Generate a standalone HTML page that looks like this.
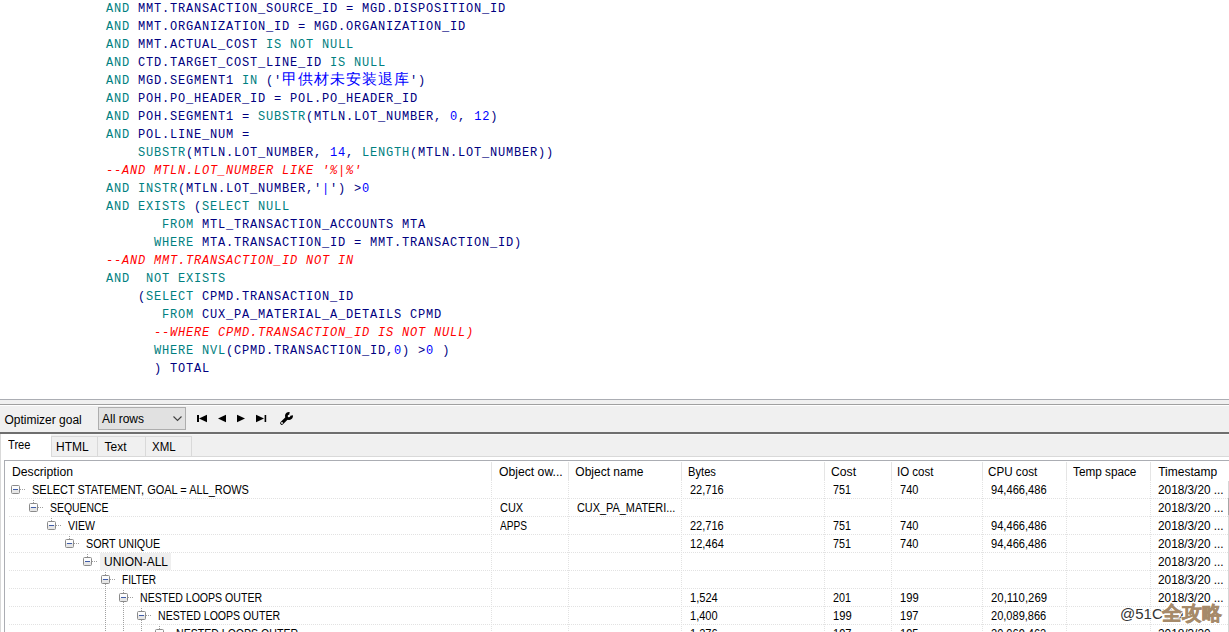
<!DOCTYPE html>
<html><head><meta charset="utf-8">
<style>
*{margin:0;padding:0;box-sizing:border-box}
html,body{width:1229px;height:632px;overflow:hidden;background:#fff;position:relative}
body{font-family:"Liberation Sans",sans-serif;font-size:12px;color:#000}
#code{position:absolute;left:0;top:0;width:1229px;height:399px;background:#fff;overflow:hidden}
.ln{position:absolute;white-space:pre;font-family:"Liberation Mono",monospace;font-size:12px;letter-spacing:0.8px;line-height:18px;color:#000080;height:18px}
.k{color:#008080}
.n{color:#0000ff}
.s{color:#0000ff}
.c{color:#ff0000;font-style:italic}
.cj{font-size:15px;letter-spacing:1px;color:#0000ff;line-height:18px;display:inline-block;height:18px;vertical-align:top;width:128px;overflow:hidden}
.r{position:absolute}
.t{position:absolute;white-space:pre;font-size:12px;line-height:15px;height:15px;transform-origin:0 0;color:#000}
.dv{width:1px;background:repeating-linear-gradient(to bottom,#e2e2e2 0,#e2e2e2 1px,transparent 1px,transparent 2px)}
.dh{height:1px;background:repeating-linear-gradient(to right,#e2e2e2 0,#e2e2e2 1px,transparent 1px,transparent 2px)}
.dv2{width:1px;background:repeating-linear-gradient(to bottom,#a0a0a0 0,#a0a0a0 1px,transparent 1px,transparent 2px)}
.dh2{height:1px;background:repeating-linear-gradient(to right,#a0a0a0 0,#a0a0a0 1px,transparent 1px,transparent 2px)}
.bx{width:9px;height:9px;border:1px solid #8a8a8a;border-radius:1.5px;background:linear-gradient(#fcfcfc,#fcfcfc 50%,#e6e6e6 50%)}
.bx i{position:absolute;left:1px;top:3px;width:5px;height:1px;background:#3f5ca8}
</style></head><body>
<div id="code">
<div class="ln" style="left:106px;top:0px"><span class="k">AND</span> MMT.TRANSACTION_SOURCE_ID = MGD.DISPOSITION_ID</div>
<div class="ln" style="left:106px;top:18px"><span class="k">AND</span> MMT.ORGANIZATION_ID = MGD.ORGANIZATION_ID</div>
<div class="ln" style="left:106px;top:36px"><span class="k">AND</span> MMT.ACTUAL_COST <span class="k">IS NOT NULL</span></div>
<div class="ln" style="left:106px;top:54px"><span class="k">AND</span> CTD.TARGET_COST_LINE_ID <span class="k">IS NULL</span></div>
<div class="ln" style="left:106px;top:72px"><span class="k">AND</span> MGD.SEGMENT1 <span class="k">IN</span> ('<span class="cj">甲供材未安装退库</span>')</div>
<div class="ln" style="left:106px;top:90px"><span class="k">AND</span> POH.PO_HEADER_ID = POL.PO_HEADER_ID</div>
<div class="ln" style="left:106px;top:108px"><span class="k">AND</span> POH.SEGMENT1 = <span class="k">SUBSTR</span>(MTLN.LOT_NUMBER, <span class="n">0</span>, <span class="n">12</span>)</div>
<div class="ln" style="left:106px;top:126px"><span class="k">AND</span> POL.LINE_NUM =</div>
<div class="ln" style="left:138px;top:144px"><span class="k">SUBSTR</span>(MTLN.LOT_NUMBER, <span class="n">14</span>, <span class="k">LENGTH</span>(MTLN.LOT_NUMBER))</div>
<div class="ln c" style="left:106px;top:162px">--AND MTLN.LOT_NUMBER LIKE '%|%'</div>
<div class="ln" style="left:106px;top:180px"><span class="k">AND</span> <span class="k">INSTR</span>(MTLN.LOT_NUMBER,'<span class="s">|</span>') &gt;<span class="n">0</span></div>
<div class="ln" style="left:106px;top:198px"><span class="k">AND</span> <span class="k">EXISTS</span> (<span class="k">SELECT NULL</span></div>
<div class="ln" style="left:162px;top:216px"><span class="k">FROM</span> MTL_TRANSACTION_ACCOUNTS MTA</div>
<div class="ln" style="left:154px;top:234px"><span class="k">WHERE</span> MTA.TRANSACTION_ID = MMT.TRANSACTION_ID)</div>
<div class="ln c" style="left:106px;top:252px">--AND MMT.TRANSACTION_ID NOT IN</div>
<div class="ln" style="left:106px;top:270px"><span class="k">AND</span>  <span class="k">NOT EXISTS</span></div>
<div class="ln" style="left:138px;top:288px">(<span class="k">SELECT</span> CPMD.TRANSACTION_ID</div>
<div class="ln" style="left:162px;top:306px"><span class="k">FROM</span> CUX_PA_MATERIAL_A_DETAILS CPMD</div>
<div class="ln c" style="left:154px;top:324px">--WHERE CPMD.TRANSACTION_ID IS NOT NULL)</div>
<div class="ln" style="left:154px;top:342px"><span class="k">WHERE</span> <span class="k">NVL</span>(CPMD.TRANSACTION_ID,<span class="n">0</span>) &gt;<span class="n">0</span> )</div>
<div class="ln" style="left:154px;top:360px">) TOTAL</div>
</div>
<div class="r" style="left:0;top:399px;width:1229px;height:1px;background:#abadb3"></div>
<div class="r" style="left:0;top:400px;width:1229px;height:4px;background:#f0f0f0"></div>
<div class="r" style="left:0;top:404px;width:1229px;height:1px;background:#a0a0a0"></div>
<div class="r" style="left:0;top:405px;width:1229px;height:1px;background:#ffffff"></div>
<div class="r" style="left:0;top:406px;width:1229px;height:26px;background:#f0f0f0"></div>
<div class="r" style="left:0;top:432px;width:1229px;height:2px;background:#6e6e6e"></div>
<div class="t" style="left:4.4px;top:413px">Optimizer goal</div>

<div class="r" style="left:98px;top:407px;width:88px;height:23px;background:#e1e1e1;border:1px solid #adadad"></div>
<div class="t" style="left:102px;top:412px">All rows</div>

<svg class="r" style="left:172px;top:415px" width="11" height="8" viewBox="0 0 11 8"><path d="M1.5 1.5 L5.5 5.5 L9.5 1.5" fill="none" stroke="#404040" stroke-width="1.1"/></svg>
<svg class="r" style="left:190px;top:410px" width="110" height="18" viewBox="0 0 110 18"><rect x="7" y="5" width="2" height="7" fill="#000"/><path d="M9 8.5 L17 4.8 L17 12.2 Z" fill="#000"/><path d="M28 8.5 L36 4.8 L36 12.2 Z" fill="#000"/><path d="M47 4.8 L47 12.2 L55 8.5 Z" fill="#000"/><path d="M66 4.8 L66 12.2 L74 8.5 Z" fill="#000"/><rect x="74.6" y="5" width="1.6" height="7" fill="#000"/></svg>
<svg class="r" style="left:276px;top:408px" width="22" height="20" viewBox="0 0 22 20"><path d="M5.8 15.2 L10.6 10.4" stroke="#000" stroke-width="3.3" stroke-linecap="round"/><path d="M15.61 7.54 A2.65 2.65 0 1 1 13.46 5.39" fill="none" stroke="#000" stroke-width="2.7"/><circle cx="6" cy="15" r="0.9" fill="#fff"/></svg>
<div class="r" style="left:0;top:434px;width:1229px;height:198px;background:#f0f0f0"></div>
<div class="r" style="left:0;top:434px;width:1229px;height:1px;background:#f7f7f7"></div>
<div class="r" style="left:0;top:456px;width:1229px;height:176px;background:#fff;border-top:1px solid #d9d9d9;border-left:1px solid #d9d9d9"></div>
<div class="r" style="left:51px;top:436px;width:47px;height:21px;background:#f0f0f0;border:1px solid #d9d9d9"></div>
<div class="t" style="left:56px;top:440px">HTML</div>

<div class="r" style="left:97px;top:436px;width:49px;height:21px;background:#f0f0f0;border:1px solid #d9d9d9"></div>
<div class="t" style="left:104.5px;top:440px">Text</div>

<div class="r" style="left:145px;top:436px;width:47px;height:21px;background:#f0f0f0;border:1px solid #d9d9d9"></div>
<div class="t" style="left:151.5px;top:440px;transform:scaleX(0.960)">XML</div>

<div class="r" style="left:0;top:434px;width:51px;height:23px;background:#fff;border-left:1px solid #d9d9d9"></div>
<div class="t" style="left:8px;top:438px;transform:scaleX(0.930)">Tree</div>

<div class="r" style="left:4px;top:460px;width:1240px;height:200px;background:#fff;border:1px solid #abadb3"></div>
<div class="t" style="left:11.5px;top:465px;transform:scaleX(1.016)">Description</div>

<div class="r" style="left:491px;top:462px;width:1px;height:19px;background:#e5e5e5"></div>
<div class="t" style="left:498.6px;top:465px;transform:scaleX(1.016)">Object ow...</div>

<div class="r" style="left:568px;top:462px;width:1px;height:19px;background:#e5e5e5"></div>
<div class="t" style="left:575.3px;top:465px">Object name</div>

<div class="r" style="left:681px;top:462px;width:1px;height:19px;background:#e5e5e5"></div>
<div class="t" style="left:687.6px;top:465px;transform:scaleX(0.931)">Bytes</div>

<div class="r" style="left:824px;top:462px;width:1px;height:19px;background:#e5e5e5"></div>
<div class="t" style="left:830.5px;top:465px;transform:scaleX(1.017)">Cost</div>

<div class="r" style="left:891px;top:462px;width:1px;height:19px;background:#e5e5e5"></div>
<div class="t" style="left:897.4px;top:465px;transform:scaleX(0.960)">IO cost</div>

<div class="r" style="left:982px;top:462px;width:1px;height:19px;background:#e5e5e5"></div>
<div class="t" style="left:988.4px;top:465px;transform:scaleX(0.971)">CPU cost</div>

<div class="r" style="left:1066px;top:462px;width:1px;height:19px;background:#e5e5e5"></div>
<div class="t" style="left:1073.3px;top:465px;transform:scaleX(0.980)">Temp space</div>

<div class="r" style="left:1150px;top:462px;width:1px;height:19px;background:#e5e5e5"></div>
<div class="t" style="left:1158.2px;top:465px">Timestamp</div>

<div class="r dv" style="left:491px;top:482px;height:150px"></div>
<div class="r dv" style="left:568px;top:482px;height:150px"></div>
<div class="r dv" style="left:681px;top:482px;height:150px"></div>
<div class="r dv" style="left:824px;top:482px;height:150px"></div>
<div class="r dv" style="left:891px;top:482px;height:150px"></div>
<div class="r dv" style="left:982px;top:482px;height:150px"></div>
<div class="r dv" style="left:1066px;top:482px;height:150px"></div>
<div class="r dv" style="left:1150px;top:482px;height:150px"></div>
<div class="r dh" style="left:9px;top:498px;width:1220px"></div>
<div class="r dh" style="left:9px;top:516px;width:1220px"></div>
<div class="r dh" style="left:9px;top:534px;width:1220px"></div>
<div class="r dh" style="left:9px;top:552px;width:1220px"></div>
<div class="r dh" style="left:9px;top:570px;width:1220px"></div>
<div class="r dh" style="left:9px;top:588px;width:1220px"></div>
<div class="r dh" style="left:9px;top:606px;width:1220px"></div>
<div class="r dh" style="left:9px;top:624px;width:1220px"></div>
<div class="r dh" style="left:9px;top:642px;width:1220px"></div>
<div class="r" style="left:100px;top:553px;width:71px;height:17px;background:#efefef"></div>
<div class="r bx" style="left:11px;top:485px"><i></i></div>
<div class="r dh2" style="left:20px;top:489px;width:6px"></div>
<div class="t" style="left:32px;top:483px;transform:scaleX(0.914)">SELECT STATEMENT, GOAL = ALL_ROWS</div>

<div class="t" style="left:689.5px;top:483px;transform:scaleX(0.917)">22,716</div>

<div class="t" style="left:832.5px;top:483px;transform:scaleX(0.894)">751</div>

<div class="t" style="left:899.5px;top:483px;transform:scaleX(0.920)">740</div>

<div class="t" style="left:990.5px;top:483px;transform:scaleX(0.926)">94,466,486</div>

<div class="t" style="left:1158.3px;top:483px;transform:scaleX(0.984)">2018/3/20 ...</div>

<div class="r bx" style="left:29px;top:503px"><i></i></div>
<div class="r dh2" style="left:38px;top:507px;width:6px"></div>
<div class="r dv2" style="left:33px;top:500px;height:3px"></div>
<div class="t" style="left:50px;top:501px;transform:scaleX(0.868)">SEQUENCE</div>

<div class="t" style="left:499.5px;top:501px;transform:scaleX(0.912)">CUX</div>

<div class="t" style="left:576.5px;top:501px;transform:scaleX(0.908)">CUX_PA_MATERI...</div>

<div class="t" style="left:1158.3px;top:501px;transform:scaleX(0.984)">2018/3/20 ...</div>

<div class="r bx" style="left:47px;top:521px"><i></i></div>
<div class="r dh2" style="left:56px;top:525px;width:6px"></div>
<div class="r dv2" style="left:51px;top:518px;height:3px"></div>
<div class="t" style="left:68px;top:519px;transform:scaleX(0.877)">VIEW</div>

<div class="t" style="left:499.5px;top:519px;transform:scaleX(0.844)">APPS</div>

<div class="t" style="left:689.5px;top:519px;transform:scaleX(0.917)">22,716</div>

<div class="t" style="left:832.5px;top:519px;transform:scaleX(0.894)">751</div>

<div class="t" style="left:899.5px;top:519px;transform:scaleX(0.920)">740</div>

<div class="t" style="left:990.5px;top:519px;transform:scaleX(0.926)">94,466,486</div>

<div class="t" style="left:1158.3px;top:519px;transform:scaleX(0.984)">2018/3/20 ...</div>

<div class="r bx" style="left:65px;top:539px"><i></i></div>
<div class="r dh2" style="left:74px;top:543px;width:6px"></div>
<div class="r dv2" style="left:69px;top:536px;height:3px"></div>
<div class="t" style="left:86px;top:537px;transform:scaleX(0.894)">SORT UNIQUE</div>

<div class="t" style="left:689.5px;top:537px;transform:scaleX(0.920)">12,464</div>

<div class="t" style="left:832.5px;top:537px;transform:scaleX(0.894)">751</div>

<div class="t" style="left:899.5px;top:537px;transform:scaleX(0.920)">740</div>

<div class="t" style="left:990.5px;top:537px;transform:scaleX(0.926)">94,466,486</div>

<div class="t" style="left:1158.3px;top:537px;transform:scaleX(0.984)">2018/3/20 ...</div>

<div class="r bx" style="left:83px;top:557px"><i></i></div>
<div class="r dh2" style="left:92px;top:561px;width:6px"></div>
<div class="r dv2" style="left:87px;top:554px;height:3px"></div>
<div class="t" style="left:104px;top:555px">UNION-ALL</div>

<div class="t" style="left:1158.3px;top:555px;transform:scaleX(0.984)">2018/3/20 ...</div>

<div class="r bx" style="left:101px;top:575px"><i></i></div>
<div class="r dh2" style="left:110px;top:579px;width:6px"></div>
<div class="r dv2" style="left:105px;top:572px;height:3px"></div>
<div class="t" style="left:122px;top:573px;transform:scaleX(0.841)">FILTER</div>

<div class="t" style="left:1158.3px;top:573px;transform:scaleX(0.984)">2018/3/20 ...</div>

<div class="r bx" style="left:119px;top:593px"><i></i></div>
<div class="r dh2" style="left:128px;top:597px;width:6px"></div>
<div class="r dv2" style="left:123px;top:590px;height:3px"></div>
<div class="t" style="left:140px;top:591px;transform:scaleX(0.880)">NESTED LOOPS OUTER</div>

<div class="t" style="left:689.5px;top:591px;transform:scaleX(0.925)">1,524</div>

<div class="t" style="left:832.5px;top:591px;transform:scaleX(0.900)">201</div>

<div class="t" style="left:899.5px;top:591px;transform:scaleX(0.933)">199</div>

<div class="t" style="left:990.5px;top:591px;transform:scaleX(0.947)">20,110,269</div>

<div class="t" style="left:1158.3px;top:591px;transform:scaleX(0.984)">2018/3/20 ...</div>

<div class="r bx" style="left:137px;top:611px"><i></i></div>
<div class="r dh2" style="left:146px;top:615px;width:6px"></div>
<div class="r dv2" style="left:141px;top:608px;height:3px"></div>
<div class="t" style="left:158px;top:609px;transform:scaleX(0.880)">NESTED LOOPS OUTER</div>

<div class="t" style="left:689.5px;top:609px;transform:scaleX(0.920)">1,400</div>

<div class="t" style="left:832.5px;top:609px;transform:scaleX(0.933)">199</div>

<div class="t" style="left:899.5px;top:609px;transform:scaleX(0.920)">197</div>

<div class="t" style="left:990.5px;top:609px;transform:scaleX(0.920)">20,089,866</div>

<div class="r bx" style="left:155px;top:629px"><i></i></div>
<div class="r dh2" style="left:164px;top:633px;width:6px"></div>
<div class="r dv2" style="left:159px;top:626px;height:3px"></div>
<div class="t" style="left:176px;top:627px;transform:scaleX(0.880)">NESTED LOOPS OUTER</div>

<div class="t" style="left:689.5px;top:627px;transform:scaleX(0.920)">1,276</div>

<div class="t" style="left:832.5px;top:627px;transform:scaleX(0.920)">197</div>

<div class="t" style="left:899.5px;top:627px;transform:scaleX(0.920)">195</div>

<div class="t" style="left:990.5px;top:627px;transform:scaleX(0.920)">20,069,462</div>

<div class="t" style="left:1158.3px;top:627px;transform:scaleX(0.984)">2018/3/20 ...</div>

<div class="r dv2" style="left:105px;top:584px;height:48px"></div>
<div class="r dv2" style="left:123px;top:602px;height:30px"></div>
<div class="r dv2" style="left:141px;top:620px;height:12px"></div>
<div class="r dv2" style="left:159px;top:638px;height:-6px"></div>
<div class="r" style="left:1228px;top:481px;width:1px;height:151px;background:#d6d6d6"></div>
<div class="r" style="left:1228px;top:498px;width:1px;height:17px;background:#a6a6a6"></div>
<div class="t" style="left:1120px;top:605px;font-size:15px;line-height:18px;height:18px;color:#333;text-shadow:1px 0 0 #fff,-1px 0 0 #fff,0 1px 0 #fff,0 -1px 0 #fff,1px 1px 0 #fff,-1px -1px 0 #fff,1px -1px 0 #fff,-1px 1px 0 #fff">@51CTO</div>
<div class="t" style="left:1162px;top:602px;font-size:20px;line-height:22px;height:22px;font-weight:900;color:#a68a6a;-webkit-text-stroke:0.5px #a68a6a;text-shadow:1px 0 0 #fff,-1px 0 0 #fff,0 1px 0 #fff,0 -1px 0 #fff,1px 1px 0 #fff,-1px -1px 0 #fff,1px -1px 0 #fff,-1px 1px 0 #fff">全攻略</div>
</body></html>
